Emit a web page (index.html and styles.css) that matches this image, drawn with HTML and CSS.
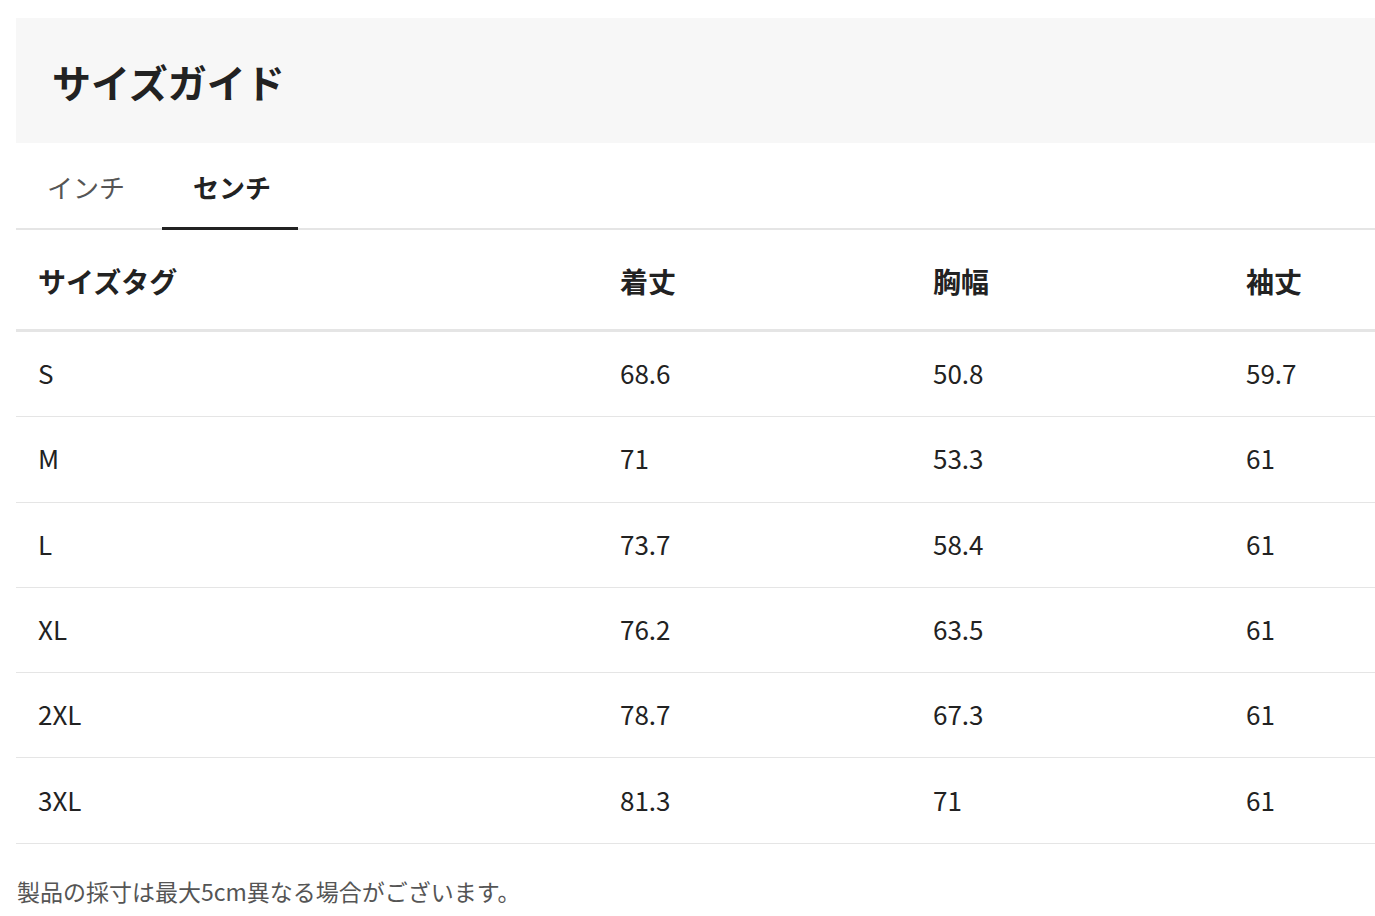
FILE: index.html
```html
<!DOCTYPE html>
<html lang="ja">
<head>
<meta charset="utf-8">
<title>サイズガイド</title>
<link rel="stylesheet" href="styles.css">
</head>
<body>
<div class="guide">
  <header class="guide-head">
    <h1 class="guide-title">サイズガイド</h1>
  </header>
  <nav class="tabs">
    <button class="tab">インチ</button>
    <button class="tab tab-active">センチ</button>
  </nav>
  <table class="size-table">
    <colgroup>
      <col class="c1"><col class="c2"><col class="c3"><col class="c4">
    </colgroup>
    <thead>
      <tr><th>サイズタグ</th><th>着丈</th><th>胸幅</th><th>袖丈</th></tr>
    </thead>
    <tbody>
      <tr><td>S</td><td>68.6</td><td>50.8</td><td>59.7</td></tr>
      <tr><td>M</td><td>71</td><td>53.3</td><td>61</td></tr>
      <tr><td>L</td><td>73.7</td><td>58.4</td><td>61</td></tr>
      <tr><td>XL</td><td>76.2</td><td>63.5</td><td>61</td></tr>
      <tr><td>2XL</td><td>78.7</td><td>67.3</td><td>61</td></tr>
      <tr><td>3XL</td><td>81.3</td><td>71</td><td>61</td></tr>
    </tbody>
  </table>
  <p class="note">製品の採寸は最大5cm異なる場合がございます。</p>
</div>
</body>
</html>
```

FILE: styles.css
```css
html, body {
  margin: 0;
  padding: 0;
  background: #ffffff;
}
body {
  font-family: "Noto Sans CJK JP", "Noto Sans", sans-serif;
  color: #222222;
  overflow: hidden;
}
.guide {
  width: 1359px;
  padding: 18px 0 0 16px;
}
.guide-head {
  background: #f7f7f7;
  height: 125px;
  display: flex;
  align-items: center;
  padding-left: 36px;
  box-sizing: border-box;
}
.guide-title {
  margin: 0;
  font-size: 39px;
  font-weight: 700;
  line-height: 1;
  color: #222222;
  padding-top: 2px;
}
.tabs {
  display: flex;
  gap: 10px;
  height: 85px;
  border-bottom: 2px solid #e5e5e5;
}
.tab {
  font-family: inherit;
  font-size: 26px;
  background: none;
  border: none;
  border-bottom: 3px solid transparent;
  padding: 4px 27px 0 31px;
  margin-bottom: -2px;
  color: #555555;
  line-height: 1;
  white-space: nowrap;
  height: 87px;
  cursor: pointer;
}
.tab-active {
  font-weight: 700;
  color: #222222;
  border-bottom-color: #222222;
}
.size-table {
  width: 1359px;
  border-collapse: collapse;
  table-layout: fixed;
}
.c1 { width: 582px; }
.c2 { width: 313px; }
.c3 { width: 313px; }
.c4 { width: 151px; }
.size-table th {
  text-align: left;
  font-size: 28px;
  font-weight: 700;
  height: 96px;
  padding: 3px 0 0 22px;
  border-bottom: 3px solid #e5e5e5;
  color: #222222;
}
.size-table td {
  font-size: 26px;
  height: 81.3px;
  padding: 0 0 3px 22px;
  border-bottom: 1px solid #e5e5e5;
  color: #222222;
}
.note {
  margin: 30px 0 0 1px;
  font-size: 23px;
  color: #555555;
}
```
